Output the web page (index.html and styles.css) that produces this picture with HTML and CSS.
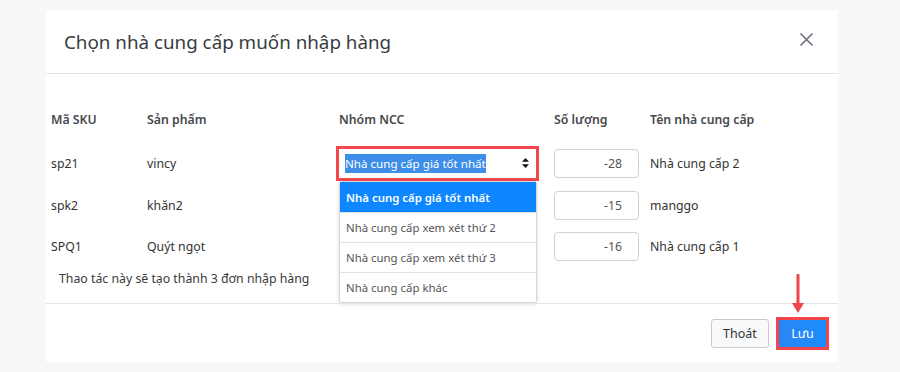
FILE: index.html
```html
<!DOCTYPE html>
<html lang="vi">
<head>
    <meta charset="UTF-8">
    <title>Chọn nhà cung cấp</title>
    <link rel="stylesheet" href="styles.css">
</head>
<body>
    <div class="modal">
        <div class="modal-header">
            <h2 class="modal-title">Chọn nhà cung cấp muốn nhập hàng</h2>
            <span class="close">
                <svg width="13" height="13" viewBox="0 0 13 13"><path d="M1 1 L12 12 M12 1 L1 12" stroke="#6c757d" stroke-width="1.7" stroke-linecap="round"/></svg>
            </span>
        </div>
        <div class="modal-body">
            <div class="grid">
                <div class="th">Mã SKU</div>
                <div class="th">Sản phẩm</div>
                <div class="th">Nhóm NCC</div>
                <div class="th">Số lượng</div>
                <div class="th">Tên nhà cung cấp</div>

                <div class="td">sp21</div>
                <div class="td">vincy</div>
                <div class="td">
                    <div class="select">
                        <span class="selected-text">Nhà cung cấp giá tốt nhất</span>
                        <span class="caret">
                            <svg width="7" height="10" viewBox="0 0 7 10"><path d="M3.5 0 L7 3.8 H0 Z M3.5 10 L0 6.2 H7 Z" fill="#111"/></svg>
                        </span>
                    </div>
                </div>
                <div class="td"><div class="qty">-28</div></div>
                <div class="td">Nhà cung cấp 2</div>

                <div class="td">spk2</div>
                <div class="td">khăn2</div>
                <div class="td"></div>
                <div class="td"><div class="qty">-15</div></div>
                <div class="td">manggo</div>

                <div class="td">SPQ1</div>
                <div class="td">Quýt ngọt</div>
                <div class="td"></div>
                <div class="td"><div class="qty">-16</div></div>
                <div class="td">Nhà cung cấp 1</div>
            </div>
            <p class="note">Thao tác này sẽ tạo thành 3 đơn nhập hàng</p>

            <ul class="dropdown">
                <li class="active">Nhà cung cấp giá tốt nhất</li>
                <li>Nhà cung cấp xem xét thứ 2</li>
                <li>Nhà cung cấp xem xét thứ 3</li>
                <li>Nhà cung cấp khác</li>
            </ul>
        </div>
        <div class="modal-footer">
            <button class="btn btn-light">Thoát</button>
            <button class="btn btn-primary">Lưu</button>
            <div class="arrow">
                <svg width="12" height="40" viewBox="0 0 12 40"><rect x="4.5" y="0" width="3" height="32" rx="1" fill="#f0444a"/><path d="M0 29 H12 L6 39 Z" fill="#f0444a"/></svg>
            </div>
        </div>
    </div>
</body>
</html>
```

FILE: styles.css
```css
* {
    box-sizing: border-box;
}

body {
    margin: 0;
    background-color: #f6f8f8;
    font-family: 'Noto Sans', 'Open Sans', sans-serif;
    font-size: 12.3px;
    color: #333;
}

.modal {
    width: 792px;
    height: 352px;
    margin: 10px 0 0 46px;
    background: #fff;
    display: flex;
    flex-direction: column;
}

.modal-header {
    height: 64px;
    padding: 0 18px;
    border-bottom: 1px solid #e2e4e6;
    display: flex;
    align-items: center;
    justify-content: space-between;
}

.modal-title {
    margin: 0;
    font-size: 18.8px;
    font-weight: 400;
    color: #383c40;
}

.close {
    display: flex;
    margin-right: 7px;
    margin-top: -4px;
}

.modal-body {
    position: relative;
    height: 229px;
    padding: 23px 0 0 5px;
}

.grid {
    display: grid;
    grid-template-columns: 96px 192px 215px 96px 1fr;
    grid-template-rows: 45px 42px 42px 41px;
}

.th {
    display: flex;
    align-items: center;
    font-weight: 600;
    color: #45494d;
}

.td {
    display: flex;
    align-items: center;
}

.select {
    width: 203px;
    height: 35px;
    margin-left: -3px;
    border: 3px solid #f4474d;
    display: flex;
    align-items: center;
    justify-content: space-between;
    padding: 0 7px 0 6px;
    font-size: 11.6px;
}

.selected-text {
    background: #3d8ee8;
    color: #fff;
    padding: 2px 0;
}

.caret {
    display: flex;
}

.qty {
    width: 85px;
    height: 29px;
    border: 1px solid #cfd2d5;
    border-radius: 4px;
    display: flex;
    align-items: center;
    justify-content: flex-end;
    padding-right: 16px;
    color: #555;
}

.note {
    margin: 3px 0 0 8px;
    color: #3a3a3a;
}

.dropdown {
    position: absolute;
    top: 107px;
    left: 293px;
    width: 198px;
    margin: 0;
    padding: 0;
    list-style: none;
    background: #fff;
    border: 1px solid #d5d8db;
    border-radius: 3px;
    box-shadow: 0 1px 4px rgba(0, 0, 0, 0.15);
}

.dropdown li {
    height: 30px;
    padding: 0 6px;
    display: flex;
    align-items: center;
    font-size: 11.4px;
    color: #555;
    border-top: 1px solid #e0e2e4;
}

.dropdown li.active {
    background: #0d86ff;
    color: #fff;
    font-weight: 600;
    border-top: none;
}

.modal-footer {
    position: relative;
    flex: 1;
    border-top: 1px solid #e2e4e6;
    display: flex;
    align-items: center;
    justify-content: flex-end;
    gap: 7px;
    padding-right: 9px;
    padding-top: 1px;
}

.btn {
    font-family: inherit;
    font-size: 12.5px;
    height: 29px;
    border-radius: 3px;
    cursor: pointer;
}

.btn-light {
    width: 58px;
    background: #f8f9fa;
    border: 1px solid #c8cbce;
    color: #333;
}

.btn-primary {
    width: 53px;
    height: 33px;
    background: linear-gradient(to right, #2a86f0, #1a8cff);
    border: 3px solid #f4474d;
    border-radius: 0;
    color: #fff;
}

.arrow {
    position: absolute;
    right: 34px;
    top: -30px;
}
```
